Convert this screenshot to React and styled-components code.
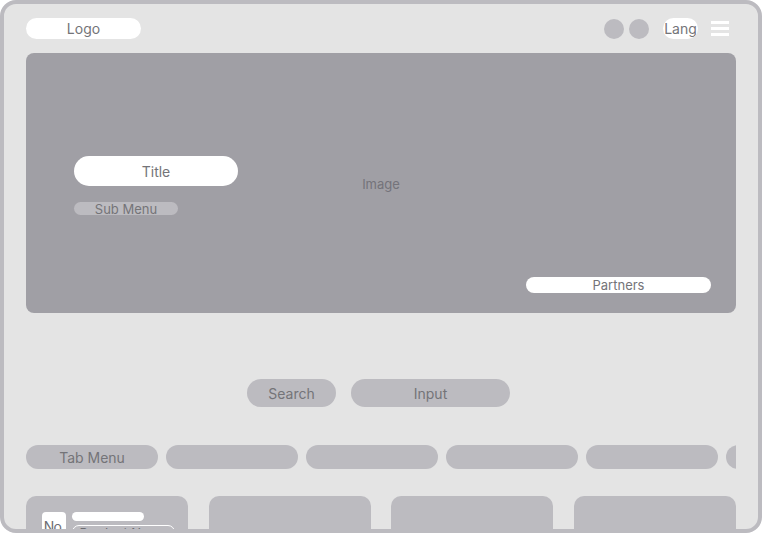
import React from "react";
import styled, { createGlobalStyle } from "styled-components";

const GlobalStyle = createGlobalStyle`
  html, body {
    margin: 0;
    padding: 0;
    background: #ffffff;
    font-family: Inter, "Liberation Sans", sans-serif;
  }
`;

const Frame = styled.div`
  box-sizing: border-box;
  width: 762px;
  height: 533px;
  border: 4px solid #bcbbc0;
  border-radius: 16px;
  background: #e4e4e4;
  overflow: hidden;
  padding: 14px 22px 0;
  display: flex;
  flex-direction: column;

  & > * {
    flex-shrink: 0;
  }
`;

const Header = styled.div`
  display: flex;
  justify-content: space-between;
  align-items: center;
  height: 21px;
`;

const Pill = styled.div`
  box-sizing: border-box;
  display: flex;
  align-items: center;
  justify-content: center;
  flex-shrink: 0;
  width: ${(p) => p.w}px;
  height: ${(p) => p.h}px;
  border-radius: ${(p) => p.h / 2}px;
  background: ${(p) => (p.light ? "#ffffff" : "#bcbbc0")};
  color: #747478;
  font-size: ${(p) => p.fs || 14}px;
  white-space: nowrap;
  overflow: hidden;
`;

const RightGroup = styled.div`
  display: flex;
  align-items: center;
  margin-right: 7px;
`;

const Dots = styled.div`
  display: flex;
  gap: 5px;
  margin-right: 14px;
`;

const Dot = styled.div`
  width: 20px;
  height: 20px;
  border-radius: 50%;
  background: #bcbbc0;
`;

const Burger = styled.div`
  display: flex;
  flex-direction: column;
  gap: 3.6px;
  margin-left: 13px;

  span {
    display: block;
    width: 18px;
    height: 2.8px;
    background: #ffffff;
  }
`;

const Hero = styled.div`
  position: relative;
  margin-top: 14px;
  height: 260px;
  border-radius: 8px;
  background: #a09fa5;
  display: flex;
  align-items: center;
  justify-content: center;
`;

const ImageLabel = styled.span`
  color: #74737a;
  font-size: 13px;
  margin-top: 2px;
`;

const HeroText = styled.div`
  position: absolute;
  left: 48px;
  top: 103px;
  display: flex;
  flex-direction: column;
  gap: 16px;
`;

const PartnersSlot = styled.div`
  position: absolute;
  right: 25px;
  bottom: 20px;
`;

const SearchRow = styled.div`
  display: flex;
  justify-content: center;
  gap: 15px;
  margin-top: 66px;
  padding-right: 5px;
`;

const Tabs = styled.div`
  display: flex;
  gap: 8px;
  margin-top: 38px;
  overflow: hidden;
`;

const Cards = styled.div`
  display: flex;
  justify-content: space-between;
  margin-top: 27px;
`;

const Card = styled.div`
  width: 162px;
  height: 120px;
  border-radius: 10px;
  background: #bcbbc0;
  flex-shrink: 0;
  padding: 16px;
  box-sizing: border-box;
  display: flex;
  gap: 6px;
`;

const NoBox = styled.div`
  flex-shrink: 0;
  width: 24px;
  height: 24px;
  border-radius: 4px;
  background: #ffffff;
  color: #6d6d72;
  font-size: 14px;
  display: flex;
  align-items: center;
  justify-content: center;
  padding-top: 4px;
  box-sizing: border-box;
  letter-spacing: -0.8px;
`;

const CardInfo = styled.div`
  display: flex;
  flex-direction: column;
  gap: 4px;
`;

const Bar = styled.div`
  width: 72px;
  height: 9px;
  border-radius: 5px;
  background: #ffffff;
`;

const NameTag = styled.div`
  width: 103px;
  height: 14px;
  border-radius: 7px;
  border: 1px solid #ffffff;
  box-sizing: border-box;
  color: #6d6d72;
  font-size: 13px;
  text-align: center;
  line-height: 14px;
`;

const tabs = ["Tab Menu", "", "", "", "", ""];

export default function App() {
  return (
    <>
      <GlobalStyle />
      <Frame>
        <Header>
          <Pill light w={115} h={21}>Logo</Pill>
          <RightGroup>
            <Dots>
              <Dot />
              <Dot />
            </Dots>
            <Pill light w={35} h={21}>Lang</Pill>
            <Burger>
              <span />
              <span />
              <span />
            </Burger>
          </RightGroup>
        </Header>

        <Hero>
          <ImageLabel>Image</ImageLabel>
          <HeroText>
            <Pill light w={164} h={30}>Title</Pill>
            <Pill w={104} h={13} fs={13}>Sub Menu</Pill>
          </HeroText>
          <PartnersSlot>
            <Pill light w={185} h={16} fs={13}>Partners</Pill>
          </PartnersSlot>
        </Hero>

        <SearchRow>
          <Pill w={89} h={28}>Search</Pill>
          <Pill w={159} h={28}>Input</Pill>
        </SearchRow>

        <Tabs>
          {tabs.map((t, i) => (
            <Pill key={i} w={132} h={24}>{t}</Pill>
          ))}
        </Tabs>

        <Cards>
          <Card>
            <NoBox>No.</NoBox>
            <CardInfo>
              <Bar />
              <NameTag>Product Name</NameTag>
            </CardInfo>
          </Card>
          <Card />
          <Card />
          <Card />
        </Cards>
      </Frame>
    </>
  );
}
